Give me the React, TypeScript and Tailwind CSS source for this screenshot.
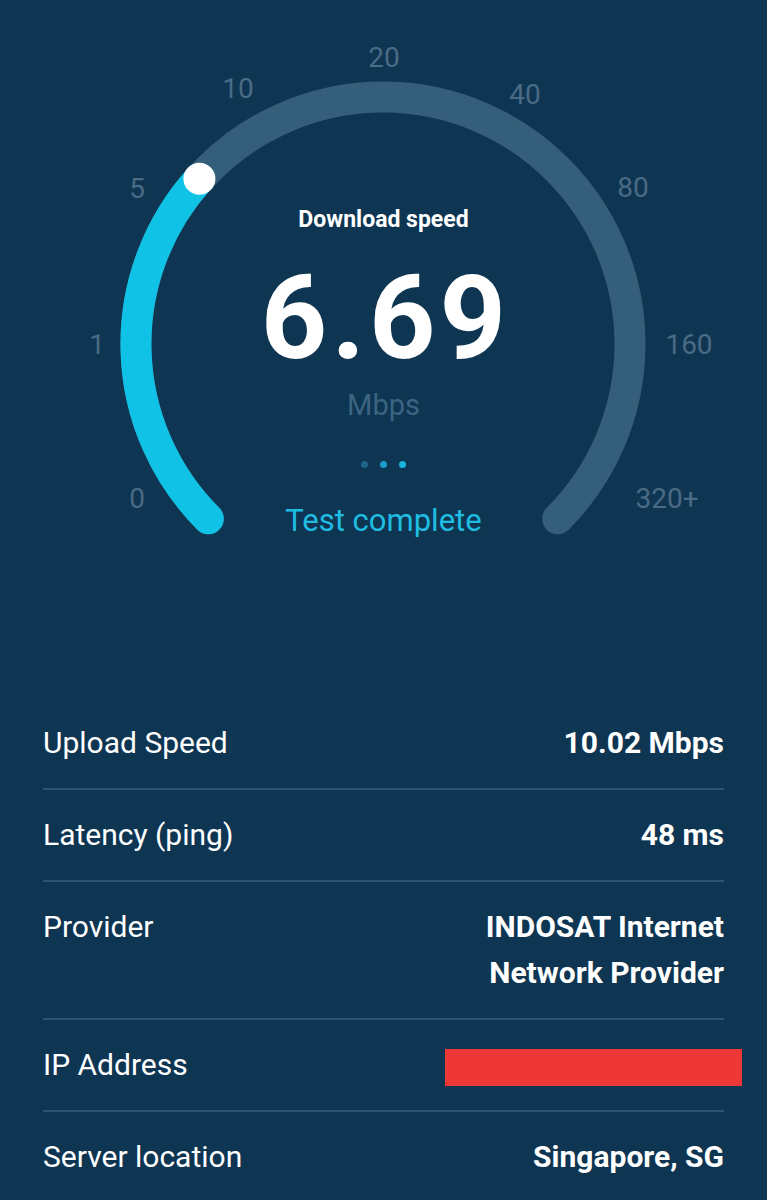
import React from "react"

const rows = [
  { label: "Upload Speed", value: ["10.02 Mbps"] },
  { label: "Latency (ping)", value: ["48 ms"] },
  { label: "Provider", value: ["INDOSAT Internet", "Network Provider"] },
  { label: "IP Address", value: null },
  { label: "Server location", value: ["Singapore, SG"] },
]

const ticks = [
  { t: "0", x: 137, y: 498 },
  { t: "1", x: 97, y: 344 },
  { t: "5", x: 137, y: 188 },
  { t: "10", x: 238, y: 88 },
  { t: "20", x: 384, y: 57 },
  { t: "40", x: 525, y: 94 },
  { t: "80", x: 633, y: 187 },
  { t: "160", x: 689, y: 344 },
  { t: "320+", x: 667, y: 498 },
]

function Gauge() {
  return (
    <svg className="absolute inset-0" width="767" height="698" viewBox="0 0 767 698">
      {/* track */}
      <path
        d="M 208.3 518.7 A 247 247 0 1 1 557.7 518.7"
        fill="none"
        stroke="#355e7a"
        strokeWidth="31"
        strokeLinecap="round"
      />
      {/* progress */}
      <path
        d="M 208.3 518.7 A 247 247 0 0 1 199.4 178.7"
        fill="none"
        stroke="#10c3e6"
        strokeWidth="31"
        strokeLinecap="round"
      />
      <circle cx="199.4" cy="178.7" r="16" fill="#ffffff" />
      {ticks.map((k) => (
        <text
          key={k.t}
          x={k.x}
          y={k.y}
          textAnchor="middle"
          dominantBaseline="central"
          fill="#4a6b85"
          fontSize="28"
          fontFamily="Roboto, sans-serif"
        >
          {k.t}
        </text>
      ))}
    </svg>
  )
}

export default function App() {
  return (
    <div className="w-[767px] h-[1200px] overflow-hidden bg-[#0e3552] text-white font-['Roboto',sans-serif]">
      <div className="relative h-[698px]">
        <Gauge />
        <div className="relative flex flex-col items-center pt-[208px]">
          <p className="text-[23px] leading-none font-bold">Download speed</p>
          <p className="mt-[29px] pl-[4px] text-[116px] leading-none font-bold tracking-[4px]">6.69</p>
          <p className="mt-[15px] text-[29px] leading-none text-[#3b6482]">Mbps</p>
          <div className="mt-[41px] flex gap-[12px]">
            <span className="w-[7px] h-[7px] rounded-full bg-[#1f6488]" />
            <span className="w-[7px] h-[7px] rounded-full bg-[#1a9cc6]" />
            <span className="w-[7px] h-[7px] rounded-full bg-[#1bb4dc]" />
          </div>
          <p className="mt-[37px] text-[31px] leading-none text-[#1fbde2]">Test complete</p>
        </div>
      </div>

      <div className="px-[43px]">
        {rows.map((r, i) => (
          <div key={r.label} className={i < rows.length - 1 ? "border-b-2 border-[#2c5470]" : ""}>
            <div className="flex justify-between items-start py-[22px] text-[30px] leading-[46px]">
              <span>{r.label}</span>
              {r.value ? (
                <div className="text-right font-bold">
                  {r.value.map((v) => (
                    <p key={v}>{v}</p>
                  ))}
                </div>
              ) : (
                <div className="mt-[7px] -mr-[18px] w-[297px] h-[37px] bg-[#ee3737]" />
              )}
            </div>
          </div>
        ))}
      </div>
    </div>
  )
}
